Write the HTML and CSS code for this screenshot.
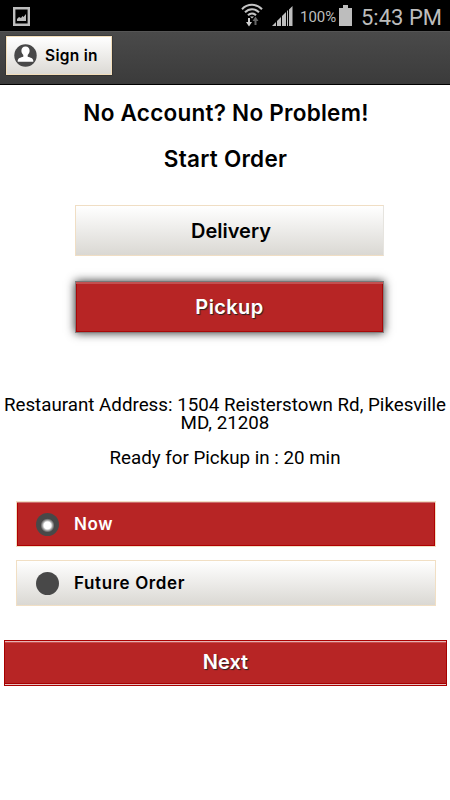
FILE: index.html
```html
<!DOCTYPE html>
<html lang="en">
<head>
    <meta charset="UTF-8">
    <meta name="viewport" content="width=device-width, initial-scale=1.0">
    <title>Start Order</title>
    <link rel="stylesheet" href="styles.css">
</head>
<body>
    <div class="status-bar">
        <svg class="icon-picture" width="17" height="19" viewBox="0 0 17 19">
            <path d="M1.2 1.2h14.6v16.6H1.2z" fill="none" stroke="#bdbdbd" stroke-width="2.4"/>
            <path d="M4 14v-2l2-2 2 1 1.500-2 1 1L13 7v7z" fill="#bdbdbd"/>
        </svg>
        <div class="status-right">
            <svg class="icon-wifi" width="22" height="24" viewBox="0 0 22 24">
                <g fill="none" stroke="#c4c4c4" stroke-width="2">
                    <path d="M1 6.2C6.500 .4 15.500 .4 21 6.200"/>
                    <path d="M4 9.300c4-4.200 10-4.200 14 0"/>
                    <path d="M7 12.300c2.300-2.500 5.700-2.500 8 0"/>
                </g>
                <path d="M9 13.500h4L11 15.500z" fill="#c4c4c4"/>
                <path d="M7 15h2v4h2l-3 4.500L5 19h2z" fill="#d0d0d0"/>
                <path d="M13.500 22h2v-4h2l-3-4.500-3 4.500h2z" fill="#666"/>
            </svg>
            <svg class="icon-signal" width="21" height="20" viewBox="0 0 21 20">
                <path d="M0 20l4-4v4zM5 20v-5l4-4v9zM10 20V10l4-4v14zM15 20V5l1-1v16zM17 20V3.500L20.500 0v20z" fill="#bdbdbd"/>
            </svg>
            <span class="battery-text">100%</span>
            <svg class="icon-battery" width="13" height="21" viewBox="0 0 13 21">
                <path d="M4 0h5v3h4v18H0V3h4z" fill="#bdbdbd"/>
            </svg>
            <span class="clock">5:43 PM</span>
        </div>
    </div>

    <div class="header">
        <button class="sign-in">
            <svg width="23" height="23" viewBox="0 0 23 23">
                <circle cx="11.500" cy="11.500" r="11.200" fill="#484848"/>
                <path d="M11.500 2.500c2.700 0 4.100 1.900 4.100 4.300 0 1.600-.7 3.200-1.900 4.200v1.800c2.600.7 5.600 1.500 5.600 4.200v.8H3.700V17c0-2.700 3-3.500 5.600-4.200V11c-1.200-1-1.900-2.600-1.900-4.200 0-2.400 1.400-4.300 4.100-4.300z" fill="#fff"/>
            </svg>
            <span>Sign in</span>
        </button>
    </div>

    <div class="content">
        <h1 class="title-account">No Account? No Problem!</h1>
        <h1 class="title-order">Start Order</h1>

        <div class="order-types">
            <button class="order-type">Delivery</button>
            <button class="order-type selected">Pickup</button>
        </div>

        <p class="address">Restaurant Address: 1504 Reisterstown Rd, Pikesville MD, 21208</p>
        <p class="ready">Ready for Pickup in : 20 min</p>

        <div class="time-options">
            <div class="time-option checked">
                <span class="radio"></span>
                <span>Now</span>
            </div>
            <div class="time-option">
                <span class="radio"></span>
                <span>Future Order</span>
            </div>
        </div>

        <button class="next">Next</button>
    </div>
</body>
</html>
```
FILE: styles.css
```css
* {
    box-sizing: border-box;
}

body {
    margin: 0;
    background-color: #fff;
    color: #000;
    font-family: Inter, "Liberation Sans", sans-serif;
}

button {
    font-family: inherit;
    color: #000;
    padding: 0;
    border-radius: 0;
    cursor: pointer;
}

.status-bar {
    display: flex;
    justify-content: space-between;
    height: 31px;
    padding: 0 10px 0 13px;
    background-color: #000;
    color: #bdbdbd;
    font-family: Roboto, sans-serif;
}

.icon-picture {
    margin-top: 7px;
}

.status-right {
    display: flex;
}

.icon-wifi {
    margin: 3px 9px 0 0;
}

.icon-signal {
    margin: 6px 7px 0 0;
}

.battery-text {
    width: 37px;
    margin-right: 2px;
    font-size: 15px;
    line-height: 34px;
    white-space: nowrap;
}

.icon-battery {
    margin: 5px 9px 0 0;
}

.clock {
    width: 79px;
    font-size: 22px;
    line-height: 35px;
    white-space: nowrap;
}

.header {
    height: 54px;
    padding: 5px 6px;
    border-top: 1px solid #555;
    border-bottom: 1px solid #000;
    background: linear-gradient(#4a4a4a, #3b3b3b);
}

.sign-in {
    display: flex;
    align-items: center;
    width: 106px;
    height: 39px;
    margin-top: -1px;
    padding: 0 0 0 7px;
    border: 1px solid #f3deba;
    background: linear-gradient(#fff, #dcdad5);
    box-shadow: 0 0 1px #000;
    font-size: 15.500px;
    font-weight: 600;
    letter-spacing: 0.3px;
}

.sign-in span {
    margin-left: 8px;
    white-space: nowrap;
}

.content {
    padding: 14px 4px 0;
    text-align: center;
}

h1 {
    margin: 0;
    font-size: 22.500px;
    font-weight: 600;
    line-height: 28px;
    letter-spacing: 0.25px;
    white-space: nowrap;
}

.title-account {
    margin: 0 0 18px 2px;
}

.title-order {
    margin-left: 1px;
}

.order-types {
    display: flex;
    flex-direction: column;
    gap: 25px;
    width: 309px;
    margin: 32px 0 0 71px;
}

.order-type {
    height: 51px;
    padding-left: 3px;
    border: 1px solid #f0dec4;
    border-right-color: #e6e4df;
    background: linear-gradient(#fff, #dad8d3);
    font-size: 20px;
    font-weight: 600;
}

.order-type.selected {
    height: 52px;
    padding-left: 0;
    border: 1px solid #858080;
    border-top-color: #777;
    background: #b72525;
    box-shadow: 0 0 9px 0 rgba(0, 0, 0, 0.8), inset 0 2px 0 #c35050, inset 0 0 0 1px #a80808;
    color: #fff;
    letter-spacing: 0.4px;
    text-shadow: 1px 1px 1px #222;
}

p {
    margin: 0 -2px;
    font-family: Roboto, sans-serif;
    font-size: 18.750px;
    line-height: 18px;
}

.address {
    margin-top: 63px;
}

.ready {
    margin-top: 17px;
}

.time-options {
    display: flex;
    flex-direction: column;
    gap: 13px;
    width: 420px;
    margin: 34px 0 0 12px;
}

.time-option {
    display: flex;
    align-items: center;
    height: 46px;
    padding-left: 19px;
    border: 1px solid #f1dfc4;
    background: linear-gradient(#fff, #dad8d3);
    font-size: 17px;
    font-weight: 600;
    letter-spacing: 0.6px;
}

.time-option.checked {
    background: #b72525;
    box-shadow: inset 0 1px 0 #cb6c6c, inset 0 0 0 1px #b00000;
    color: #fff;
}

.radio {
    width: 23px;
    height: 23px;
    margin-right: 15px;
    border-radius: 50%;
    background: #484848;
}

.checked .radio {
    margin-top: 1px;
    background: radial-gradient(circle at 50% 54%, #fff 0 3.500px, #aaa 5px, #484848 7px);
}

.next {
    display: block;
    width: 443px;
    height: 46px;
    margin-top: 34px;
    padding-bottom: 2px;
    border: 1px solid #a80000;
    background: #b72525;
    box-shadow: inset 0 1px 0 #e6b3b3, inset 0 2px 0 #c84c4c, inset 0 -1px 0 #e8c0c0, inset 0 -2px 0 #a80000;
    color: #fff;
    font-size: 20px;
    font-weight: 600;
    text-shadow: 1px 1px 1px #222;
}
```
